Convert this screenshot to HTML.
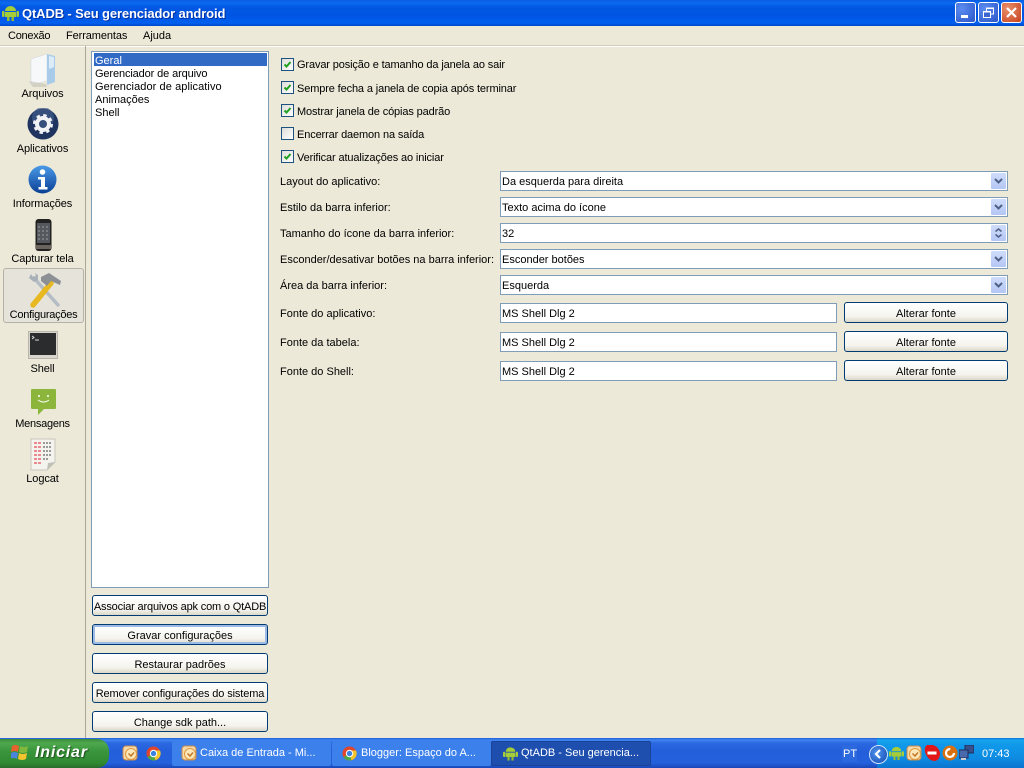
<!DOCTYPE html>
<html><head><meta charset="utf-8">
<style>
html,body{margin:0;padding:0}
body{width:1024px;height:768px;position:relative;overflow:hidden;background:#ece9d8;font:11px "Liberation Sans",sans-serif;color:#000}
.a,.t,.cb,.combo,.btn,.le,svg{position:absolute}
.t{white-space:nowrap;line-height:13px}
.c{text-align:center;left:0;width:85px;letter-spacing:-.1px}
.k{letter-spacing:-.13px}
.cb{left:281px;width:11px;height:11px;border:1px solid #1c5180;background:linear-gradient(135deg,#dcdcd7,#fff)}
.cb svg{left:1px;top:1px}
.combo,.le{left:500px;box-sizing:border-box;border:1px solid #7f9db9;background:#fff;line-height:20px;padding-left:1px;white-space:nowrap}
.combo{width:508px;height:20px}
.arr{position:absolute;right:1px;top:1px;width:15px;height:16px;background:linear-gradient(#cfdcfb,#b4c6f4);border-radius:1px}
.le{width:337px;height:20px}
.btn{box-sizing:border-box;border:1px solid #003c74;border-radius:3px;background:linear-gradient(#fff,#f5f4ee 70%,#dcd8c9);text-align:center;white-space:nowrap;line-height:23px}
.tb{position:absolute;top:741px;height:25px;box-sizing:border-box;border-radius:2px;color:#fff;line-height:24px;white-space:nowrap}
</style></head><body>

<!-- title bar -->
<div class="a" style="left:0;top:0;width:1024px;height:26px;background:linear-gradient(#0a5be0 0,#0a6af0 3px,#0258e2 7px,#0054e3 16px,#0060f0 23px,#0048c8 26px)"></div>
<svg style="left:2px;top:5px" width="17" height="16" viewBox="0 0 17 16"><path d="M3 6a5.500 5 0 0 1 11 0z" fill="#a5cc39"/><rect x="3" y="7" width="11" height="5" fill="#a5cc39"/><rect x="0" y="6" width="2.500" height="6" rx="1" fill="#a5cc39"/><rect x="14.500" y="6" width="2.500" height="6" rx="1" fill="#a5cc39"/><rect x="5" y="12" width="2.500" height="4" fill="#94bb30"/><rect x="9.500" y="12" width="2.500" height="4" fill="#94bb30"/></svg>
<div class="t" style="left:22px;top:6px;color:#fff;font-weight:bold;font-size:13px;line-height:15px;letter-spacing:-.13px;text-shadow:1px 1px 0 #0030a0">QtADB - Seu gerenciador android</div>
<div class="a" style="left:955px;top:2px;width:19px;height:19px;border:1px solid #fff;border-radius:3px;background:radial-gradient(circle at 30% 30%,#5c8cf0,#2a56c8)"><div class="a" style="left:5px;top:12px;width:7px;height:3px;background:#fff"></div></div>
<div class="a" style="left:978px;top:2px;width:19px;height:19px;border:1px solid #fff;border-radius:3px;background:radial-gradient(circle at 30% 30%,#5c8cf0,#2a56c8)">
<svg style="left:4px;top:4px" width="12" height="12" viewBox="0 0 12 12" fill="none" stroke="#fff"><rect x="3.500" y="1" width="7" height="6"/><rect x="0.500" y="4.500" width="7" height="6" fill="#3a64d0"/><path d="M1 5h6M4 1.500h6" stroke-width="1"/></svg></div>
<div class="a" style="left:1001px;top:2px;width:19px;height:19px;border:1px solid #fff;border-radius:3px;background:radial-gradient(circle at 30% 30%,#e8906c,#c8401c)">
<svg style="left:3px;top:3px" width="13" height="13" viewBox="0 0 13 13"><path d="M2 2l9 9M11 2l-9 9" stroke="#fff" stroke-width="2.200"/></svg></div>

<!-- menu -->
<div class="t" style="left:8px;top:30px;letter-spacing:-.25px">Conexão</div>
<div class="t" style="left:66px;top:30px;letter-spacing:-.1px">Ferramentas</div>
<div class="t" style="left:143px;top:30px">Ajuda</div>
<div class="a" style="left:0;top:45px;width:1024px;height:1px;background:#d0ccb8"></div>
<div class="a" style="left:0;top:46px;width:1024px;height:1px;background:#fff"></div>

<!-- sidebar -->
<div class="a" style="left:85px;top:46px;width:1px;height:692px;background:#aca899"></div>
<div class="a" style="left:3px;top:268px;width:81px;height:55px;box-sizing:border-box;border:1px solid #b4b2a6;border-radius:3px;background:#e6e4da"></div>

<svg style="left:28px;top:52px" width="30" height="36" viewBox="0 0 30 36"><path d="M3 7l16-5v27l-16 4z" fill="#f6f8fa" stroke="#d0d6dc" stroke-width=".5"/><path d="M19 2l8 2v26l-8 3z" fill="#a8cbea"/><path d="M21 4l5 1v10l-5 2z" fill="#dcebf8"/><path d="M1 29l4 6h14l-1-3z" fill="#c8c6ba" opacity=".7"/></svg>
<div class="t c" style="top:88px">Arquivos</div>

<svg style="left:27px;top:108px" width="32" height="32" viewBox="0 0 32 32"><circle cx="16" cy="16" r="15.500" fill="#1f3560"/><circle cx="16" cy="10" r="11" fill="#46618f" opacity=".6"/><circle cx="16" cy="16" r="6" fill="none" stroke="#f0f2f6" stroke-width="4"/><circle cx="16" cy="16" r="8.500" fill="none" stroke="#f0f2f6" stroke-width="3" stroke-dasharray="3.350 3.320"/></svg>
<div class="t c" style="top:143px">Aplicativos</div>

<svg style="left:28px;top:165px" width="29" height="29" viewBox="0 0 29 29"><defs><linearGradient id="i" x1="0" y1="0" x2="0" y2="1"><stop offset="0" stop-color="#4a9ae8"/><stop offset="1" stop-color="#0a3f94"/></linearGradient></defs><circle cx="14.500" cy="14.500" r="14" fill="url(#i)"/><circle cx="14.500" cy="7" r="2.800" fill="#fff"/><path d="M10 12h7v10h2.500v2.500h-9V22h2.500v-7.500H10z" fill="#fff"/></svg>
<div class="t c" style="top:198px">Informações</div>

<svg style="left:35px;top:219px" width="17" height="32" viewBox="0 0 17 32"><rect x="0.500" y="0" width="16" height="32" rx="3" fill="#222"/><rect x="2" y="4" width="13" height="20" fill="#55585c"/><path d="M3 8h11M3 12h11M3 16h11M3 20h11" stroke="#9a9ea2" stroke-dasharray="2 2"/><path d="M1 26h15v4H1z" fill="#6a645c"/></svg>
<div class="t c" style="top:253px">Capturar tela</div>

<svg style="left:28px;top:272px" width="34" height="36" viewBox="0 0 34 36"><path d="M6 6l24 27" stroke="#b4bcc4" stroke-width="3.500" stroke-linecap="round"/><path d="M1 6l2-4 2 3 3-1-1-3 3 2 0 5-4 2z" fill="#a8b0b8"/><path d="M5 33L23 11" stroke="#e8b820" stroke-width="5.500" stroke-linecap="round"/><path d="M13 5l8-4 12 8-1 4-9-4-4 5-6-5z" fill="#8c9094"/></svg>
<div class="t c" style="top:309px;left:1px;letter-spacing:-.25px">Configurações</div>

<svg style="left:28px;top:331px" width="30" height="28" viewBox="0 0 30 28"><rect x="0.500" y="0.500" width="29" height="27" fill="#d8d6cc" stroke="#b8b6ac"/><rect x="2" y="2" width="26" height="22" fill="#2a2c2e"/><path d="M4 5l2 1.500-2 1.500M7 9h4" stroke="#ddd" fill="none"/></svg>
<div class="t c" style="top:363px">Shell</div>

<svg style="left:31px;top:389px" width="25" height="26" viewBox="0 0 25 26"><path d="M0 1a1 1 0 0 1 1-1h23a1 1 0 0 1 1 1v18a1 1 0 0 1-1 1H13l-6 6v-6H1a1 1 0 0 1-1-1z" fill="#8cb53c"/><circle cx="8" cy="7" r="1" fill="#fff"/><circle cx="17" cy="7" r="1" fill="#fff"/><path d="M7 11q5.500 4 11 0" stroke="#fff" fill="none"/></svg>
<div class="t c" style="top:418px;letter-spacing:-.25px">Mensagens</div>

<svg style="left:30px;top:438px" width="26" height="33" viewBox="0 0 26 33"><path d="M1 1h24v23l-8 8H1z" fill="#f4f3ee" stroke="#c8c6bc"/><path d="M4 5h8M4 9h8M4 13h8M4 17h8M4 21h8M4 25h8" stroke="#e88a90" stroke-width="2" stroke-dasharray="3 1"/><path d="M13 5h9M13 9h9M13 13h9M13 17h9M13 21h6" stroke="#9a9a9a" stroke-width="2" stroke-dasharray="2 1"/><path d="M25 24l-8 8 1-7z" fill="#c0bfb8"/></svg>
<div class="t c" style="top:473px">Logcat</div>

<!-- list -->
<div class="a" style="left:91px;top:51px;width:176px;height:535px;border:1px solid #7f9db9;background:#fff"></div>
<div class="a" style="left:94px;top:53px;width:173px;height:13px;background:#316ac5"></div>
<div class="t" style="left:95px;top:55px;color:#fff">Geral</div>
<div class="t" style="left:95px;top:68px;letter-spacing:-.12px">Gerenciador de arquivo</div>
<div class="t" style="left:95px;top:81px;letter-spacing:.08px">Gerenciador de aplicativo</div>
<div class="t" style="left:95px;top:94px">Animações</div>
<div class="t" style="left:95px;top:107px">Shell</div>

<!-- left buttons -->
<div class="btn" style="left:92px;top:595px;width:176px;height:21px;letter-spacing:-.17px">Associar arquivos apk com o QtADB</div>
<div class="btn" style="left:92px;top:624px;width:176px;height:21px;box-shadow:inset 0 0 0 2px #9dbbe6">Gravar configurações</div>
<div class="btn" style="left:92px;top:653px;width:176px;height:21px">Restaurar padrões</div>
<div class="btn" style="left:92px;top:682px;width:176px;height:21px;letter-spacing:-.12px">Remover configurações do sistema</div>
<div class="btn" style="left:92px;top:711px;width:176px;height:21px">Change sdk path...</div>

<!-- checks -->
<div class="cb" style="top:58px"><svg width="9" height="9" viewBox="0 0 9 9"><path d="M1.500 4.500l2 2 4-4.500" stroke="#21a121" stroke-width="2" fill="none"/></svg></div>
<div class="t k" style="left:297px;top:59px">Gravar posição e tamanho da janela ao sair</div>
<div class="cb" style="top:81px"><svg width="9" height="9" viewBox="0 0 9 9"><path d="M1.500 4.500l2 2 4-4.500" stroke="#21a121" stroke-width="2" fill="none"/></svg></div>
<div class="t k" style="left:297px;top:83px">Sempre fecha a janela de copia após terminar</div>
<div class="cb" style="top:104px"><svg width="9" height="9" viewBox="0 0 9 9"><path d="M1.500 4.500l2 2 4-4.500" stroke="#21a121" stroke-width="2" fill="none"/></svg></div>
<div class="t k" style="left:297px;top:106px">Mostrar janela de cópias padrão</div>
<div class="cb" style="top:127px"></div>
<div class="t k" style="left:297px;top:129px">Encerrar daemon na saída</div>
<div class="cb" style="top:150px"><svg width="9" height="9" viewBox="0 0 9 9"><path d="M1.500 4.500l2 2 4-4.500" stroke="#21a121" stroke-width="2" fill="none"/></svg></div>
<div class="t k" style="left:297px;top:152px">Verificar atualizações ao iniciar</div>

<!-- form -->
<div class="t" style="left:280px;top:176px">Layout do aplicativo:</div>
<div class="t" style="left:280px;top:202px">Estilo da barra inferior:</div>
<div class="t" style="left:280px;top:228px">Tamanho do ícone da barra inferior:</div>
<div class="t" style="left:280px;top:254px">Esconder/desativar botões na barra inferior:</div>
<div class="t" style="left:280px;top:280px">Área da barra inferior:</div>
<div class="t" style="left:280px;top:308px">Fonte do aplicativo:</div>
<div class="t" style="left:280px;top:337px">Fonte da tabela:</div>
<div class="t" style="left:280px;top:366px">Fonte do Shell:</div>

<div class="combo" style="top:171px">Da esquerda para direita<div class="arr"><svg style="left:3px;top:5px" width="9" height="6" viewBox="0 0 9 6"><path d="M1 1l3.500 3.500L8 1" stroke="#4d6185" stroke-width="2" fill="none"/></svg></div></div>
<div class="combo" style="top:197px">Texto acima do ícone<div class="arr"><svg style="left:3px;top:5px" width="9" height="6" viewBox="0 0 9 6"><path d="M1 1l3.500 3.500L8 1" stroke="#4d6185" stroke-width="2" fill="none"/></svg></div></div>
<div class="combo" style="top:223px">32<div class="arr"><svg style="left:3px;top:2px" width="9" height="12" viewBox="0 0 9 12"><path d="M1.500 4.500L4.500 2l3 2.500M1.500 7.500L4.500 10l3-2.500" stroke="#4d6185" stroke-width="1.500" fill="none"/></svg></div></div>
<div class="combo" style="top:249px">Esconder botões<div class="arr"><svg style="left:3px;top:5px" width="9" height="6" viewBox="0 0 9 6"><path d="M1 1l3.500 3.500L8 1" stroke="#4d6185" stroke-width="2" fill="none"/></svg></div></div>
<div class="combo" style="top:275px">Esquerda<div class="arr"><svg style="left:3px;top:5px" width="9" height="6" viewBox="0 0 9 6"><path d="M1 1l3.500 3.500L8 1" stroke="#4d6185" stroke-width="2" fill="none"/></svg></div></div>

<div class="le" style="top:303px">MS Shell Dlg 2</div>
<div class="le" style="top:332px">MS Shell Dlg 2</div>
<div class="le" style="top:361px">MS Shell Dlg 2</div>
<div class="btn" style="left:844px;top:302px;width:164px;height:21px">Alterar fonte</div>
<div class="btn" style="left:844px;top:331px;width:164px;height:21px">Alterar fonte</div>
<div class="btn" style="left:844px;top:360px;width:164px;height:21px">Alterar fonte</div>

<!-- taskbar -->
<div class="a" style="left:0;top:738px;width:1024px;height:30px;background:linear-gradient(#1f5cd8 0,#3f86f0 2px,#2a68e0 5px,#245edb 14px,#2461dc 25px,#1a48b8 30px)"></div>
<div class="a" style="left:0;top:739px;width:109px;height:29px;border-radius:0 12px 12px 0;background:linear-gradient(#3a8c3c 0,#4ea84e 4px,#3a963c 12px,#2f8a32 24px,#2a6c2c 29px)"></div>
<svg style="left:11px;top:743px" width="18" height="19" viewBox="0 0 18 19"><path d="M1 3q3-2 7 0l-1 6q-3-2-7 0z" fill="#e8602c"/><path d="M9 3q4 2 8 0l-1 6q-4 2-8 0z" fill="#80b83c"/><path d="M0 10q3-2 7 0l-1 6q-3-2-7 0z" fill="#4c84dc"/><path d="M8 10q4 2 8 0l-1 6q-4 2-8 0z" fill="#f4c42c"/></svg>
<div class="t" style="left:35px;top:744px;color:#fff;font-size:16px;line-height:18px;font-style:italic;font-weight:bold;text-shadow:1px 1px 1px #1c4c1c;letter-spacing:.8px">Iniciar</div>

<svg style="left:122px;top:745px" width="16" height="16" viewBox="0 0 16 16"><rect x="1" y="1" width="14" height="14" rx="3" fill="#f6d9a8" stroke="#c88b50"/><circle cx="9" cy="9" r="5.500" fill="#fbe7b8" stroke="#e09a40"/><path d="M6.500 8.500l2.500 2.500 3-3.500" stroke="#c07828" stroke-width="1.500" fill="none"/></svg>
<svg style="left:146px;top:746px" width="15" height="15" viewBox="0 0 15 15"><circle cx="7.500" cy="7.500" r="7" fill="#e0452c"/><path d="M7.500 7.500L1.500 11a7 7 0 0 0 8 3.200z" fill="#4aa84a"/><path d="M7.500 7.500l2 6.700A7 7 0 0 0 14 4.500H7.500z" fill="#f4c42c"/><circle cx="7.500" cy="7.500" r="3.200" fill="#3c82e0" stroke="#fff"/></svg>

<div class="tb" style="left:172px;width:159px;background:#3c80ec;padding-left:28px">Caixa de Entrada - Mi...</div>
<svg style="left:181px;top:745px" width="16" height="16" viewBox="0 0 16 16"><rect x="1" y="1" width="14" height="14" rx="3" fill="#f6d9a8" stroke="#c88b50"/><circle cx="9" cy="9" r="5.500" fill="#fbe7b8" stroke="#e09a40"/><path d="M6.500 8.500l2.500 2.500 3-3.500" stroke="#c07828" stroke-width="1.500" fill="none"/></svg>
<div class="tb" style="left:332px;width:159px;background:#3c80ec;padding-left:29px">Blogger: Espaço do A...</div>
<svg style="left:342px;top:746px" width="15" height="15" viewBox="0 0 15 15"><circle cx="7.500" cy="7.500" r="7" fill="#e0452c"/><path d="M7.500 7.500L1.500 11a7 7 0 0 0 8 3.200z" fill="#4aa84a"/><path d="M7.500 7.500l2 6.700A7 7 0 0 0 14 4.500H7.500z" fill="#f4c42c"/><circle cx="7.500" cy="7.500" r="3.200" fill="#3c82e0" stroke="#fff"/></svg>
<div class="tb" style="left:491px;width:160px;background:#1e4fae;border:1px solid #1a4296;padding-left:29px;line-height:23px">QtADB - Seu gerencia...</div>
<svg style="left:503px;top:746px" width="15" height="15" viewBox="0 0 17 16"><path d="M3 6a5.500 5 0 0 1 11 0z" fill="#a5cc39"/><rect x="3" y="7" width="11" height="5" fill="#a5cc39"/><rect x="0" y="6" width="2.500" height="6" rx="1" fill="#a5cc39"/><rect x="14.500" y="6" width="2.500" height="6" rx="1" fill="#a5cc39"/><rect x="5" y="12" width="2.500" height="4" fill="#94bb30"/><rect x="9.500" y="12" width="2.500" height="4" fill="#94bb30"/></svg>

<div class="a" style="left:842px;top:745px;width:15px;height:17px;background:#2c68de"></div>
<div class="t" style="left:843px;top:748px;color:#fff">PT</div>

<!-- tray -->
<div class="a" style="left:877px;top:738px;width:147px;height:30px;background:linear-gradient(#0c74dc 0,#18a4ee 2px,#109aea 6px,#0e8ce2 20px,#0c74d0 30px)"></div>
<div class="a" style="left:869px;top:745px;width:17px;height:17px;border:1px solid #cfe4fb;border-radius:50%;background:radial-gradient(circle at 40% 40%,#4f94ee,#1148b0)"></div>
<svg style="left:873px;top:749px" width="10" height="10" viewBox="0 0 10 10"><path d="M7 1L3 5l4 4" stroke="#fff" stroke-width="2.200" fill="none"/></svg>
<svg style="left:889px;top:745px" width="15" height="16" viewBox="0 0 17 16"><path d="M3 6a5.500 5 0 0 1 11 0z" fill="#a5cc39"/><rect x="3" y="7" width="11" height="5" fill="#a5cc39"/><rect x="0" y="6" width="2.500" height="6" rx="1" fill="#a5cc39"/><rect x="14.500" y="6" width="2.500" height="6" rx="1" fill="#a5cc39"/><rect x="5" y="12" width="2.500" height="4" fill="#94bb30"/><rect x="9.500" y="12" width="2.500" height="4" fill="#94bb30"/></svg>
<svg style="left:906px;top:745px" width="16" height="16" viewBox="0 0 16 16"><rect x="1" y="1" width="14" height="14" rx="3" fill="#f6d9a8" stroke="#c88b50"/><circle cx="9" cy="9" r="5.500" fill="#fbe7b8" stroke="#e09a40"/><path d="M6.500 8.500l2.500 2.500 3-3.500" stroke="#c07828" stroke-width="1.500" fill="none"/></svg>
<svg style="left:924px;top:745px" width="16" height="16" viewBox="0 0 16 16"><path d="M3 0h6q6 2 7 8 0 7-5 8Q4 16 1 7 0 2 3 0z" fill="#e21818"/><rect x="3.500" y="6.500" width="9" height="3" fill="#fff"/></svg>
<svg style="left:942px;top:745px" width="16" height="16" viewBox="0 0 16 16"><circle cx="8" cy="8" r="7.500" fill="#d87010"/><circle cx="8" cy="8" r="4" fill="none" stroke="#fff" stroke-width="2.200" stroke-dasharray="19 6"/></svg>
<svg style="left:959px;top:745px" width="15" height="16" viewBox="0 0 15 16"><rect x="6" y="0" width="9" height="8" fill="#37508c" stroke="#1f2c58"/><rect x="0" y="5" width="9" height="8" fill="#4a69ad" stroke="#1f2c58"/><rect x="2" y="13" width="5" height="2" fill="#ccc"/></svg>
<div class="t" style="left:982px;top:748px;color:#fff">07:43</div>
</body></html>
